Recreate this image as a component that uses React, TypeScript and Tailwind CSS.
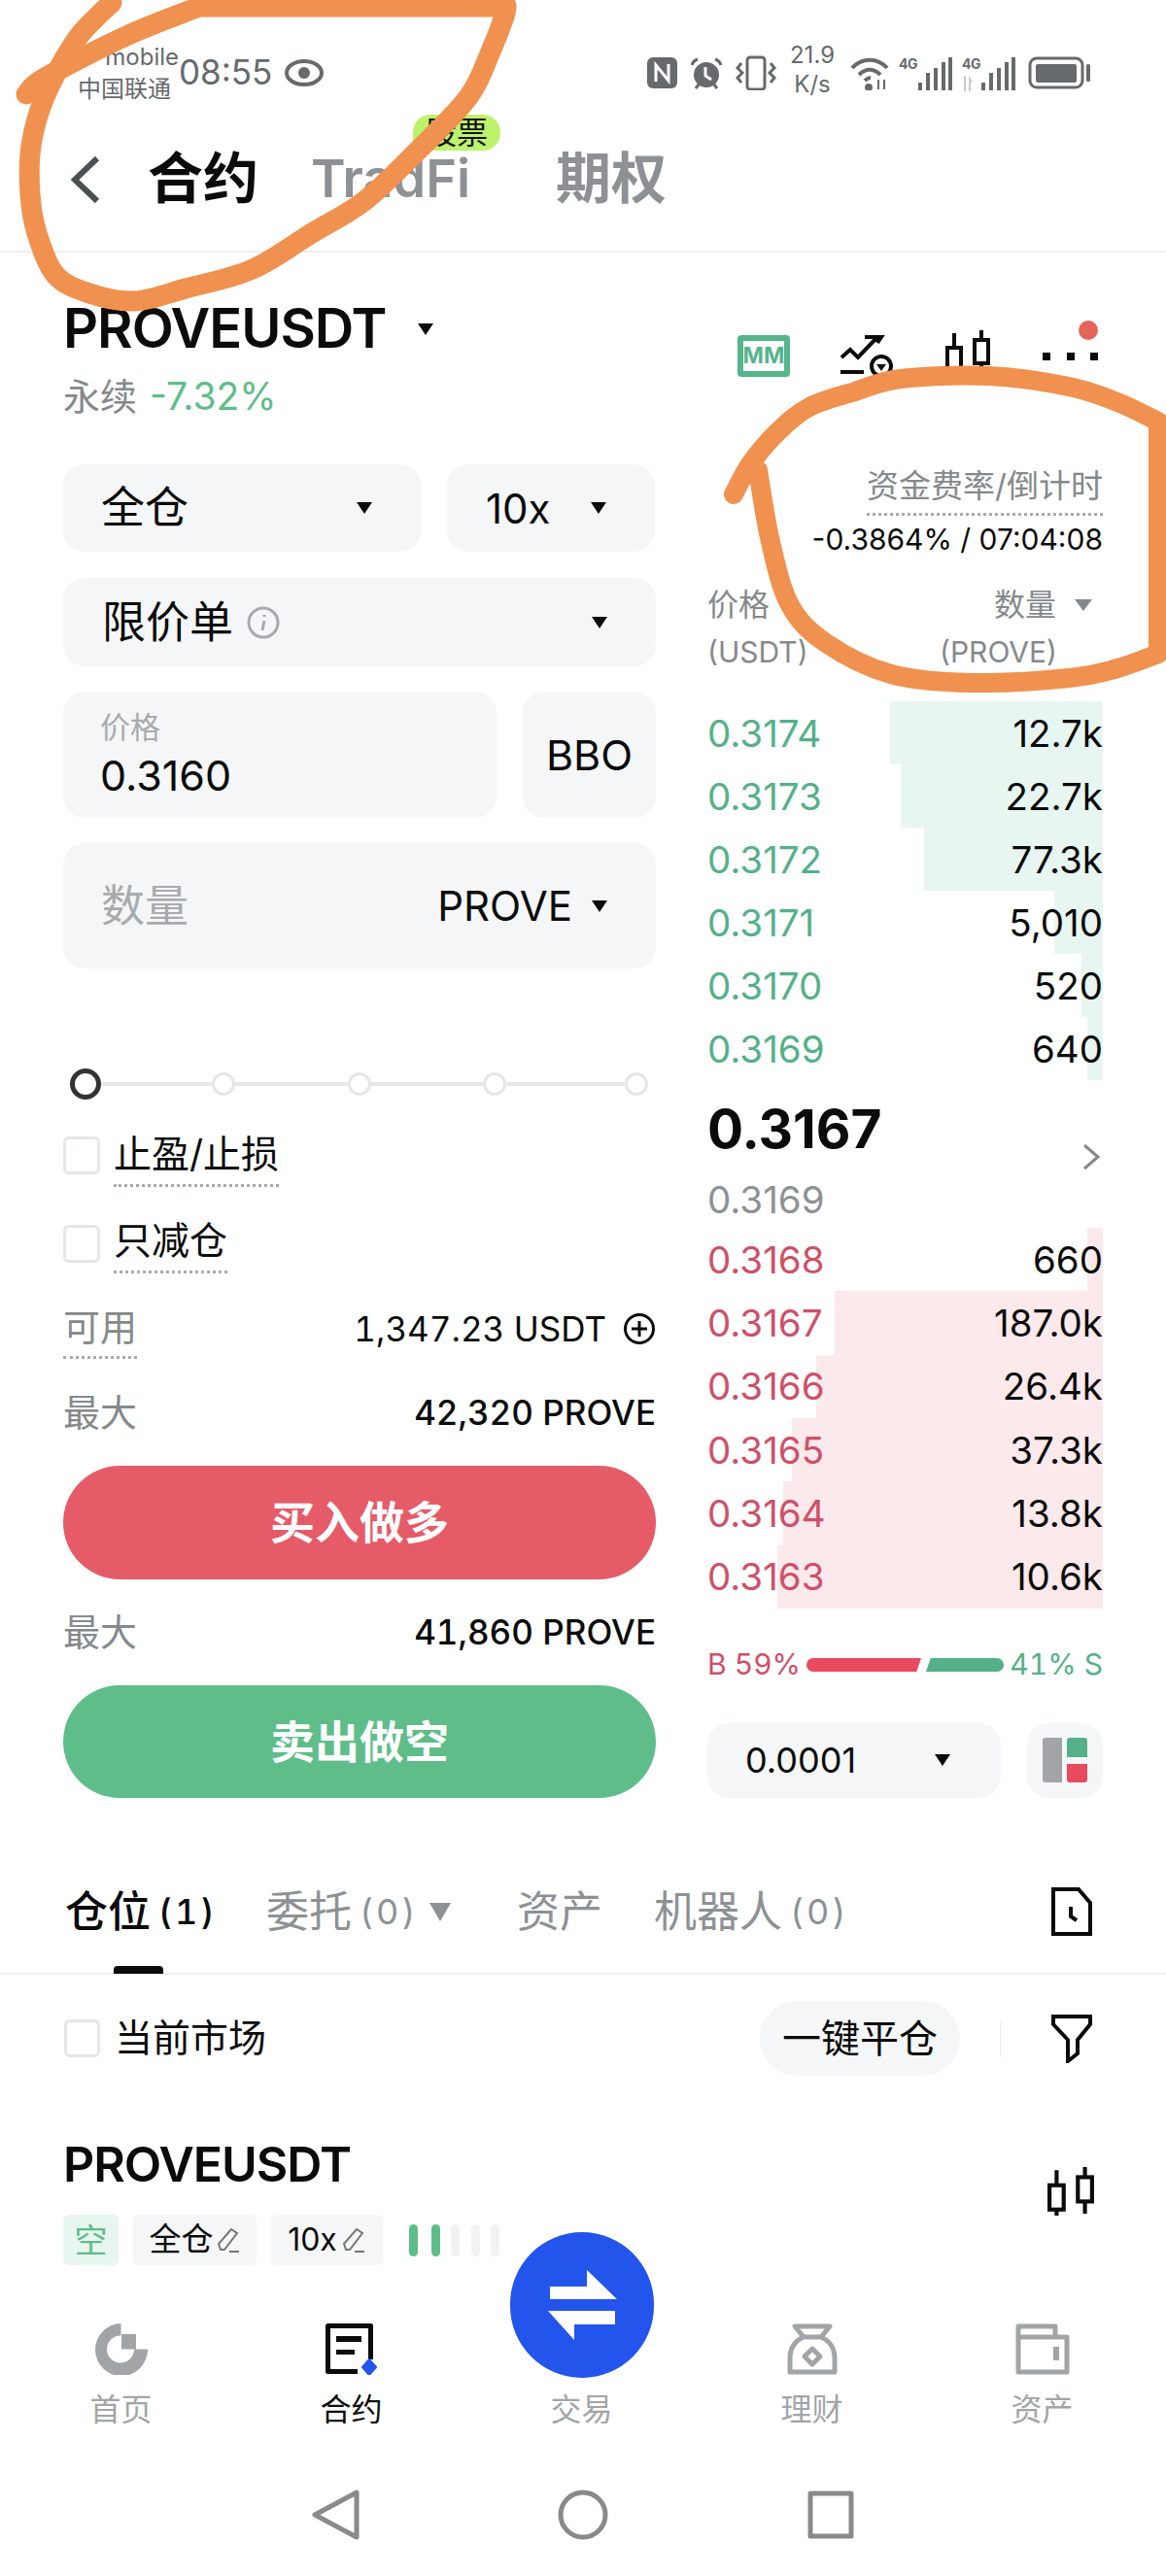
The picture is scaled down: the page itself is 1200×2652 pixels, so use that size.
const asks: [string, string, number][] = [
  ["0.3174", "12.7k", 219],
  ["0.3173", "22.7k", 208],
  ["0.3172", "77.3k", 184],
  ["0.3171", "5,010", 50],
  ["0.3170", "520", 22],
  ["0.3169", "640", 16],
];

const bids: [string, string, number][] = [
  ["0.3168", "660", 16],
  ["0.3167", "187.0k", 276],
  ["0.3166", "26.4k", 295],
  ["0.3165", "37.3k", 320],
  ["0.3164", "13.8k", 329],
  ["0.3163", "10.6k", 335],
];

// smooth line through hand-picked points, for the pen marks
function smooth(p: number[][]) {
  let d = `M${p[0][0]} ${p[0][1]}`;
  for (let i = 0; i < p.length - 1; i++) {
    const a = p[Math.max(i - 1, 0)];
    const b = p[i];
    const c = p[i + 1];
    const e = p[Math.min(i + 2, p.length - 1)];
    d += `C${b[0] + (c[0] - a[0]) / 6} ${b[1] + (c[1] - a[1]) / 6} ${c[0] - (e[0] - b[0]) / 6} ${c[1] - (e[1] - b[1]) / 6} ${c[0]} ${c[1]}`;
  }
  return d;
}

const penLeft = [
  [115, 3], [100, 17], [77, 43], [46, 100], [32, 150], [31, 200], [38, 240], [57, 283], [92, 302], [138, 310],
  [191, 297], [260, 277], [321, 240], [375, 207], [428, 157], [482, 100], [505, 53], [519, 17], [521, 6],
];
const penTop = [[205, 7], [130, 37], [46, 80], [27, 97]];
const penRightTop = [
  [755, 509], [772, 478], [800, 445], [833, 419], [880, 403], [927, 390], [1017, 387], [1100, 398], [1150, 414], [1192, 434],
];
const penRightBottom = [
  [1192, 673], [1150, 688], [1100, 698], [1000, 703], [917, 694], [850, 662], [813, 623], [793, 558], [780, 484],
];

function Caret({ className = "" }: { className?: string }) {
  return (
    <svg width="20" height="14" viewBox="0 0 20 14" className={className}>
      <path d="M2 1h16l-8 12z" fill="#0b0b0b" />
    </svg>
  );
}

function Candles({ w, h }: { w: number; h: number }) {
  return (
    <svg width={w} height={h} viewBox="0 0 48 48" fill="none" stroke="#0b0b0b" strokeWidth="4">
      <rect x="3" y="18" width="14" height="24" />
      <rect x="31" y="10" width="14" height="24" />
      <path d="M10 3v15M10 42v6M38 0v10M38 34v12" />
    </svg>
  );
}

function Pencil() {
  return (
    <svg width="26" height="28" viewBox="0 0 26 28" fill="none" stroke="#777" strokeWidth="2">
      <path d="M5 24 3 18 16 3l6 4L9 24zM14 26h10" />
    </svg>
  );
}

function Signal({ lost }: { lost?: boolean }) {
  return (
    <div className="flex h-[36px] w-[55px] text-[#666a6c]">
      <div className="flex w-[20px] flex-col">
        <span className="text-[14px] leading-[16px] font-bold tracking-[-0.5px]">4G</span>
        {lost && (
          <svg width="14" height="16" viewBox="0 0 14 16" className="mt-[4px]">
            <path d="M2 0h2v16H2zM7 16V0l4 6H9v10z" fill="#c9c9c9" />
          </svg>
        )}
      </div>
      <svg width="35" height="36" viewBox="0 0 35 36" fill="#666a6c">
        <rect x="0" y="27" width="4" height="8" />
        <rect x="8" y="17" width="4" height="18" />
        <rect x="16" y="12" width="4" height="23" />
        <rect x="24" y="6" width="4" height="29" />
        <rect x="31" y="1" width="4" height="34" />
      </svg>
    </div>
  );
}

function BookRow({ row, color, barClass }: { row: [string, string, number]; color: string; barClass: string }) {
  return (
    <div className="relative flex h-full items-center justify-between pt-[2px]">
      <div className={`absolute inset-y-0 right-0 ${barClass}`} style={{ width: row[2] }} />
      <span className="relative text-[38.5px]" style={{ color }}>
        {row[0]}
      </span>
      <span className="relative text-[38.5px] text-[#0b0b0b]">{row[1]}</span>
    </div>
  );
}

function StatusBar() {
  return (
    <div className="flex h-[120px] items-start justify-between pt-[42px] pr-[77px] pl-[80px] text-[#666a6c]">
      <div className="flex">
        <div className="flex w-[104px] flex-col items-end text-[24px] leading-[33px]">
          <span>mobile</span>
          <span className="self-start">中国联通</span>
        </div>
        <span className="mt-[8px] text-[35px] leading-[48px]">08:55</span>
        <svg width="42" height="30" viewBox="0 0 42 30" className="mt-[18px] ml-[12px]" fill="none" stroke="#666a6c">
          <ellipse cx="21" cy="15" rx="18" ry="12" strokeWidth="4" />
          <circle cx="21" cy="15" r="6" fill="#666a6c" strokeWidth="0" />
        </svg>
      </div>
      <div className="flex items-start">
        <svg width="31" height="32" viewBox="0 0 31 32" className="mt-[17px]">
          <rect width="31" height="32" rx="6" fill="#666a6c" />
          <path d="M9 25V8l13 16V7" fill="none" stroke="#fff" strokeWidth="3" />
        </svg>
        <svg width="34" height="33" viewBox="0 0 34 33" className="mt-[17px] ml-[13px]" fill="none">
          <circle cx="17" cy="18" r="13" fill="#666a6c" />
          <path d="M16 10v9l6 4" stroke="#fff" strokeWidth="3" />
          <path d="M2 8c1-3 3-5 6-6M32 8c-1-3-3-5-6-6M6 32l3-4M28 32l-3-4" stroke="#666a6c" strokeWidth="3" />
        </svg>
        <svg width="42" height="36" viewBox="0 0 42 36" className="mt-[15px] ml-[13px]" fill="none" stroke="#666a6c" strokeWidth="3">
          <rect x="12" y="2" width="18" height="33" rx="3" />
          <path d="M6 8 2 13l5 5-5 5 4 5M36 8l4 5-5 5 5 5-4 5" />
        </svg>
        <div className="ml-[12px] flex w-[50px] flex-col items-center text-[24px] leading-[30px]">
          <span>21.9</span>
          <span>K/s</span>
        </div>
        <svg width="40" height="34" viewBox="0 0 40 34" className="mt-[17px] ml-[14px]" fill="none" stroke="#666a6c" strokeWidth="4">
          <path d="M2 11c10-11 26-11 36 0M9 18c7-7 15-7 22 0M15 24c2-2 4-3 6-3" />
          <circle cx="19" cy="31" r="2" fill="#666a6c" />
          <path d="M29 23v10M35 23v10" strokeWidth="2" />
        </svg>
        <div className="mt-[16px] ml-[10px]">
          <Signal />
        </div>
        <div className="mt-[16px] ml-[10px]">
          <Signal lost />
        </div>
        <svg width="65" height="34" viewBox="0 0 65 34" className="mt-[16px] ml-[13px]" fill="none">
          <rect x="2" y="2" width="54" height="30" rx="7" stroke="#666a6c" strokeWidth="3" />
          <rect x="8" y="8" width="42" height="19" rx="2" fill="#666a6c" />
          <rect x="60" y="8" width="4" height="18" rx="1.5" fill="#666a6c" />
        </svg>
      </div>
    </div>
  );
}

function Header() {
  return (
    <div className="flex h-[140px] items-start border-b-2 border-[#efefef] pt-[32px] pl-[72px]">
      <svg width="32" height="50" viewBox="0 0 32 50" className="mt-[8px]" fill="none" stroke="#4b5053" strokeWidth="6">
        <path d="M28 3 5 25l23 22" />
      </svg>
      <span className="ml-[48px] text-[57px] leading-[64px] font-semibold text-[#0b0b0b]">合约</span>
      <div className="relative ml-[54px]">
        <span className="text-[54px] leading-[64px] font-semibold text-[#8d9194]">TradFi</span>
        <span className="absolute -top-[34px] left-[105px] flex h-[37px] w-[90px] items-center justify-center rounded-[18px] rounded-bl-none bg-[#bdf26d] text-[32px] leading-none text-[#111]">
          股票
        </span>
      </div>
      <span className="ml-[88px] text-[57px] leading-[64px] font-semibold text-[#8d9194]">期权</span>
    </div>
  );
}

function OrderForm() {
  return (
    <div className="ml-[65px] w-[610px]">
      <div className="mt-[48px] flex h-[60px] items-center">
        <span className="text-[56px] leading-[60px] font-semibold tracking-[-1px] text-[#0b0b0b]">PROVEUSDT</span>
        <Caret className="mt-[2px] ml-[28px] w-[24px]" />
      </div>
      <div className="mt-[17px] flex h-[46px] items-center">
        <span className="text-[38px] text-[#85898c]">永续</span>
        <span className="ml-[13px] text-[39px] text-[#5fbd8a]">-7.32%</span>
      </div>

      <div className="mt-[47px] flex gap-[27px]">
        <div className="flex h-[90px] w-[368px] items-center justify-between rounded-[22px] bg-[#f5f6f7] pr-[48px] pl-[39px]">
          <span className="text-[45px] text-[#0b0b0b]">全仓</span>
          <Caret />
        </div>
        <div className="flex h-[90px] w-[214px] items-center justify-between rounded-[22px] bg-[#f5f6f7] pr-[48px] pl-[40px]">
          <span className="text-[42px] text-[#0b0b0b]">10x</span>
          <Caret />
        </div>
      </div>

      <div className="mt-[27px] flex h-[91px] items-center rounded-[22px] bg-[#f5f6f7] pr-[48px] pl-[40px]">
        <span className="text-[45px] text-[#0b0b0b]">限价单</span>
        <svg width="34" height="34" viewBox="0 0 34 34" className="ml-[14px]" fill="none" stroke="#a8abad" strokeWidth="3">
          <circle cx="17" cy="17" r="15" />
          <path d="M18 15l-2 10M18 9v2" />
        </svg>
        <Caret className="ml-auto" />
      </div>

      <div className="mt-[26px] flex gap-[27px]">
        <div className="flex h-[130px] w-[446px] flex-col justify-center rounded-[22px] bg-[#f5f6f7] pl-[38px]">
          <span className="-mt-[4px] text-[31px] leading-[44px] text-[#a8abad]">价格</span>
          <span className="mt-[2px] text-[43px] leading-[50px] text-[#0b0b0b]">0.3160</span>
        </div>
        <div className="flex h-[130px] w-[137px] items-center justify-center rounded-[22px] bg-[#f5f6f7] text-[43px] text-[#0b0b0b]">
          BBO
        </div>
      </div>

      <div className="mt-[26px] flex h-[129px] items-center rounded-[22px] bg-[#f5f6f7] pr-[48px] pl-[39px]">
        <span className="text-[45px] text-[#a8abad]">数量</span>
        <span className="ml-auto text-[42px] text-[#0b0b0b]">PROVE</span>
        <Caret className="ml-[18px]" />
      </div>

      <div className="mt-[103px] flex h-[32px] items-center pl-[7px]">
        <span className="h-[32px] w-[32px] shrink-0 rounded-full border-[5px] border-[#333]" />
        <span className="h-[4px] w-[114px] bg-[#e4e6e7]" />
        <span className="h-[24px] w-[24px] shrink-0 rounded-full border-[3px] border-[#e4e6e7]" />
        <span className="h-[4px] w-[116px] bg-[#e4e6e7]" />
        <span className="h-[24px] w-[24px] shrink-0 rounded-full border-[3px] border-[#e4e6e7]" />
        <span className="h-[4px] w-[115px] bg-[#e4e6e7]" />
        <span className="h-[24px] w-[24px] shrink-0 rounded-full border-[3px] border-[#e4e6e7]" />
        <span className="h-[4px] w-[122px] bg-[#e4e6e7]" />
        <span className="h-[24px] w-[24px] shrink-0 rounded-full border-[3px] border-[#e4e6e7]" />
      </div>

      <div className="mt-[34px] flex items-start">
        <span className="mt-[4px] h-[39px] w-[38px] rounded-[6px] border-[3px] border-[#e4e6e7]" />
        <span className="ml-[14px] border-b-[3px] border-dotted border-[#a8abad] pb-[9px] text-[39px] leading-[44px] text-[#0b0b0b]">
          止盈/止损
        </span>
      </div>
      <div className="mt-[33px] flex items-start">
        <span className="mt-[6px] h-[39px] w-[38px] rounded-[6px] border-[3px] border-[#e4e6e7]" />
        <span className="ml-[14px] border-b-[3px] border-dotted border-[#a8abad] pb-[9px] text-[39px] leading-[44px] text-[#0b0b0b]">
          只减仓
        </span>
      </div>

      <div className="mt-[33px] flex items-start justify-between">
        <span className="border-b-[3px] border-dotted border-[#a8abad] pb-[8px] text-[38px] leading-[44px] text-[#85898c]">
          可用
        </span>
        <div className="mt-[2px] flex h-[44px] items-center">
          <span className="text-[35px] text-[#0b0b0b] tabular-nums">1,347.23 USDT</span>
          <svg width="34" height="34" viewBox="0 0 34 34" className="ml-[17px]" fill="none" stroke="#0b0b0b" strokeWidth="3">
            <circle cx="17" cy="17" r="14.5" />
            <path d="M17 9v16M9 17h16" />
          </svg>
        </div>
      </div>

      <div className="mt-[33px] flex h-[44px] items-center justify-between">
        <span className="text-[38px] text-[#85898c]">最大</span>
        <span className="text-[35px] font-medium text-[#0b0b0b] tabular-nums">42,320 PROVE</span>
      </div>
      <div className="mt-[33px] flex h-[117px] items-center justify-center rounded-full bg-[#e55b68] text-[46px] font-semibold text-white">
        买入做多
      </div>
      <div className="mt-[32px] flex h-[44px] items-center justify-between">
        <span className="text-[38px] text-[#85898c]">最大</span>
        <span className="text-[35px] font-medium text-[#0b0b0b] tabular-nums">41,860 PROVE</span>
      </div>
      <div className="mt-[33px] flex h-[116px] items-center justify-center rounded-full bg-[#5fbd8a] text-[46px] font-semibold text-white">
        卖出做空
      </div>
    </div>
  );
}

function OrderBook() {
  return (
    <div className="ml-[53px] w-[407px]">
      <div className="mt-[80px] flex h-[48px] items-end pl-[31px]">
        <div className="flex h-[43px] w-[54px] items-center justify-center rounded-[4px] border-[6px] border-[#55b58c] text-[23px] leading-none font-bold text-[#55b58c]">
          MM
        </div>
        <svg width="55" height="43" viewBox="0 0 55 43" className="ml-[52px]" fill="none" stroke="#0b0b0b" strokeWidth="4">
          <path d="M1 23l9-8 8 8L38 2M25 2h17l-4 6M0 38h24" />
          <circle cx="42" cy="32" r="10" />
          <path d="M37 30h10l-5 7z" fill="#0b0b0b" strokeWidth="0" />
        </svg>
        <div className="ml-[52px]">
          <Candles w={48} h={48} />
        </div>
        <div className="relative mb-[17px] ml-[53px] flex w-[57px] justify-between">
          <span className="h-[8px] w-[8px] bg-[#0b0b0b]" />
          <span className="h-[8px] w-[8px] bg-[#0b0b0b]" />
          <span className="h-[8px] w-[8px] bg-[#0b0b0b]" />
          <span className="absolute -top-[33px] right-0 h-[20px] w-[20px] rounded-full bg-[#e5645a]" />
        </div>
      </div>

      <div className="mt-[92px] flex justify-end">
        <span className="border-b-[3px] border-dotted border-[#a8abad] pb-[8px] text-[33px] leading-[40px] text-[#85898c]">
          资金费率/倒计时
        </span>
      </div>
      <div className="mt-[4px] text-right text-[30px] leading-[40px] text-[#0b0b0b]">-0.3864% / 07:04:08</div>

      <div className="mt-[28px] flex items-center text-[32px] leading-[40px] text-[#85898c]">
        <span>价格</span>
        <span className="ml-auto">数量</span>
        <svg width="18" height="12" viewBox="0 0 18 12" className="mr-[11px] ml-[19px]">
          <path d="M0 0h18l-9 12z" fill="#85898c" />
        </svg>
      </div>
      <div className="mt-[8px] flex items-center justify-between pr-[47px] text-[30px] leading-[40px] text-[#85898c]">
        <span>(USDT)</span>
        <span>(PROVE)</span>
      </div>

      <div className="mt-[31px] grid grid-rows-[repeat(6,65px)]">
        {asks.map((row) => (
          <BookRow key={row[0]} row={row} color="#55b08a" barClass="bg-[#e8f6f2]" />
        ))}
      </div>

      <div className="mt-[20px] flex h-[60px] items-start justify-between">
        <span className="text-[55px] leading-[60px] font-bold text-[#0b0b0b]">0.3167</span>
        <svg width="18" height="28" viewBox="0 0 18 28" className="mt-[45px] mr-[3px]" fill="none" stroke="#85898c" strokeWidth="3">
          <path d="M2 2l14 12L2 26" />
        </svg>
      </div>
      <div className="mt-[23px] text-[38.5px] leading-[40px] text-[#8d9194]">0.3169</div>

      <div className="mt-[9px] grid grid-rows-[repeat(6,65.33px)]">
        {bids.map((row) => (
          <BookRow key={row[0]} row={row} color="#ce5068" barClass="bg-[#fbe9ec]" />
        ))}
      </div>

      <div className="mt-[43px] flex h-[30px] items-center text-[30px] tabular-nums">
        <span className="w-[102px] text-[#ce5068]">B 59%</span>
        <span className="h-[14px] w-[118px] rounded-l-full bg-[#e84a5f] [clip-path:polygon(0_0,100%_0,96%_100%,0_100%)]" />
        <span className="ml-[5px] h-[14px] w-[80px] rounded-r-full bg-[#55b08a] [clip-path:polygon(6%_0,100%_0,100%_100%,0_100%)]" />
        <span className="ml-auto text-[#55b08a]">41% S</span>
      </div>

      <div className="mt-[45px] flex gap-[27px]">
        <div className="flex h-[77px] w-[302px] items-center justify-between rounded-[22px] bg-[#f5f6f7] pr-[50px] pl-[39px]">
          <span className="text-[36px] text-[#0b0b0b]">0.0001</span>
          <Caret />
        </div>
        <div className="flex h-[77px] w-[78px] items-center justify-center gap-[5px] rounded-[22px] bg-[#f5f6f7]">
          <span className="h-[46px] w-[20px] rounded-l-[3px] bg-[#a2a5a7]" />
          <span className="flex h-[46px] w-[21px] flex-col gap-[7px]">
            <span className="h-[20px] rounded-t-[3px] bg-[#55b08a]" />
            <span className="h-[19px] rounded-b-[3px] bg-[#e84a5f]" />
          </span>
        </div>
      </div>
    </div>
  );
}

function Positions() {
  return (
    <>
      <div className="mt-[92px] flex h-[90px] items-start border-b-2 border-[#efefef] pl-[67px] tabular-nums">
        <div className="flex w-[207px] flex-col">
          <div className="flex h-[50px] items-center text-[#0b0b0b]">
            <span className="text-[44px] font-medium">仓位</span>
            <span className="ml-[8px] text-[36px] font-medium tracking-[3px]">(1)</span>
          </div>
          <span className="mt-[31px] ml-[50px] h-[8px] w-[51px] rounded-t-[4px] bg-[#0b0b0b]" />
        </div>
        <div className="flex h-[50px] w-[258px] items-center text-[#8d9194]">
          <span className="text-[44px]">委托</span>
          <span className="ml-[8px] text-[36px] tracking-[3px]">(0)</span>
          <svg width="22" height="24" viewBox="0 0 22 24" className="ml-[12px]">
            <path d="M0 3h22L11 22z" fill="#8d9194" />
          </svg>
        </div>
        <span className="w-[141px] text-[44px] leading-[50px] text-[#8d9194]">资产</span>
        <div className="flex h-[50px] items-center text-[#8d9194]">
          <span className="text-[44px]">机器人</span>
          <span className="ml-[8px] text-[36px] tracking-[3px]">(0)</span>
        </div>
        <svg width="42" height="50" viewBox="0 0 42 50" className="mr-[76px] ml-auto" fill="none" stroke="#0b0b0b" strokeWidth="4">
          <path d="M2 2h26l12 14v32H2z" />
          <path d="M20 20v10l6 4" />
        </svg>
      </div>

      <div className="mt-[27px] flex h-[77px] items-center pr-[76px] pl-[66px]">
        <span className="h-[39px] w-[37px] rounded-[6px] border-[3px] border-[#e4e6e7]" />
        <span className="ml-[15px] text-[39px] text-[#0b0b0b]">当前市场</span>
        <div className="ml-auto flex h-[77px] w-[206px] items-center justify-center rounded-full bg-[#f5f6f7] text-[40px] text-[#0b0b0b]">
          一键平仓
        </div>
        <span className="ml-[41px] h-[38px] w-[1px] bg-[#efefef]" />
        <svg width="42" height="50" viewBox="0 0 42 50" className="ml-[52px]" fill="none" stroke="#0b0b0b" strokeWidth="4">
          <path d="M2 2h38v8L27 26v14l-10 8V26L2 10z" />
        </svg>
      </div>

      <div className="mt-[63px] flex items-start justify-between pr-[73px] pl-[65px]">
        <div>
          <div className="h-[56px] text-[50px] leading-[56px] font-semibold tracking-[-1px] text-[#0b0b0b]">PROVEUSDT</div>
          <div className="mt-[24px] flex h-[52px] items-center">
            <span className="flex h-[52px] w-[57px] items-center justify-center rounded-[6px] bg-[#e8f6f0] text-[34px] text-[#5fbd8a]">
              空
            </span>
            <span className="ml-[15px] flex h-[52px] w-[127px] items-center justify-center gap-[2px] rounded-[6px] bg-[#f5f6f7] text-[33px] text-[#0b0b0b]">
              全仓
              <Pencil />
            </span>
            <span className="ml-[15px] flex h-[52px] w-[115px] items-center justify-center gap-[4px] rounded-[6px] bg-[#f5f6f7] text-[32px] text-[#0b0b0b]">
              10x
              <Pencil />
            </span>
            <span className="ml-[27px] h-[33px] w-[9px] rounded-full bg-[#5fbd8a]" />
            <span className="ml-[14px] h-[33px] w-[9px] rounded-full bg-[#5fbd8a]" />
            <span className="ml-[11px] h-[33px] w-[9px] rounded-full bg-[#f1f2f3]" />
            <span className="ml-[12px] h-[33px] w-[9px] rounded-full bg-[#f1f2f3]" />
            <span className="ml-[11px] h-[33px] w-[9px] rounded-full bg-[#f1f2f3]" />
          </div>
        </div>
        <div className="mt-[30px]">
          <Candles w={50} h={52} />
        </div>
      </div>
    </>
  );
}

function BottomNav() {
  return (
    <>
      <div className="mt-[60px] ml-[6px] grid grid-cols-[repeat(5,237px)] text-[32px] leading-[40px] text-[#a2a5a7]">
        <div className="flex flex-col items-center">
          <svg width="55" height="53" viewBox="0 0 55 53" fill="#a2a5a7">
            <path d="M27.5 0A27 27 0 1 0 55 26.5H41A14 14 0 1 1 27.5 12.5Z" />
            <path d="M28 11h15v15.5H28z" />
          </svg>
          <span className="mt-[16px]">首页</span>
        </div>
        <div className="flex flex-col items-center">
          <svg width="54" height="53" viewBox="0 0 54 53" fill="none">
            <path d="M33 49.5H2.5v-47h44V37" stroke="#0b0b0b" strokeWidth="5" strokeLinejoin="round" />
            <path d="M11 13h26v6H11zM11 27h19v5H11z" fill="#0b0b0b" />
            <path d="M45 37l7 8-7 8-7-8z" fill="#2354eb" stroke="#2354eb" strokeWidth="2" strokeLinejoin="round" />
          </svg>
          <span className="mt-[16px] text-[#0b0b0b]">合约</span>
        </div>
        <div className="flex flex-col items-center">
          <div className="-mt-[94px] flex h-[150px] w-[148px] items-center justify-center rounded-full bg-[#2354eb]">
            <svg width="74" height="72" viewBox="0 0 74 72" fill="#fff">
              <path d="M4 17h38V0l31 30H4z" />
              <path d="M2 42h69v14H29v16z" />
            </svg>
          </div>
          <span className="mt-[13px]">交易</span>
        </div>
        <div className="flex flex-col items-center">
          <svg width="52" height="53" viewBox="0 0 52 53" fill="none" stroke="#a2a5a7" strokeWidth="5" strokeLinejoin="round">
            <path d="M17 14 8 3h36l-9 11" />
            <path d="M17 14C8 18 3 26 3 36v14h46V36c0-10-5-18-14-22z" />
            <path d="M26 26l8 8-8 8-8-8z" />
          </svg>
          <span className="mt-[16px]">理财</span>
        </div>
        <div className="flex flex-col items-center">
          <svg width="56" height="53" viewBox="0 0 56 53" fill="none" stroke="#a2a5a7" strokeWidth="5" strokeLinejoin="round">
            <path d="M3 3h38v11h12v36H3zM3 14h38" />
            <path d="M42 24v14" strokeWidth="6" />
          </svg>
          <span className="mt-[16px]">资产</span>
        </div>
      </div>

      <div className="mt-[62px] flex justify-center gap-[203px]">
        <svg width="52" height="52" viewBox="0 0 52 52" fill="none" stroke="#8a8a8a" strokeWidth="5" strokeLinejoin="round">
          <path d="M48 3v46L5 26z" />
        </svg>
        <svg width="52" height="52" viewBox="0 0 52 52" fill="none" stroke="#8a8a8a" strokeWidth="5">
          <circle cx="26" cy="26" r="23" />
        </svg>
        <svg width="52" height="52" viewBox="0 0 52 52" fill="none" stroke="#8a8a8a" strokeWidth="5" strokeLinejoin="round">
          <rect x="5" y="4" width="42" height="44" />
        </svg>
      </div>
    </>
  );
}

export default function App() {
  return (
    <div className="relative h-[2652px] w-[1200px] overflow-hidden bg-white font-[Inter,'Noto_Sans_CJK_SC',sans-serif]">
      <StatusBar />
      <Header />
      <div className="flex">
        <OrderForm />
        <OrderBook />
      </div>
      <Positions />
      <BottomNav />

      {/* pen marks drawn over the screenshot */}
      <svg width="1200" height="2652" viewBox="0 0 1200 2652" className="pointer-events-none absolute inset-0" fill="none" stroke="#f0914f" strokeWidth="21" strokeLinecap="round" strokeLinejoin="round">
        <path d={smooth(penLeft)} />
        <path d={`M521 7L205 7${smooth(penTop).replace("M205 7", "")}`} />
        <path d={`${smooth(penRightTop)}L1192 673${smooth(penRightBottom).replace("M1192 673", "")}`} strokeWidth="20" />
      </svg>
    </div>
  );
}
